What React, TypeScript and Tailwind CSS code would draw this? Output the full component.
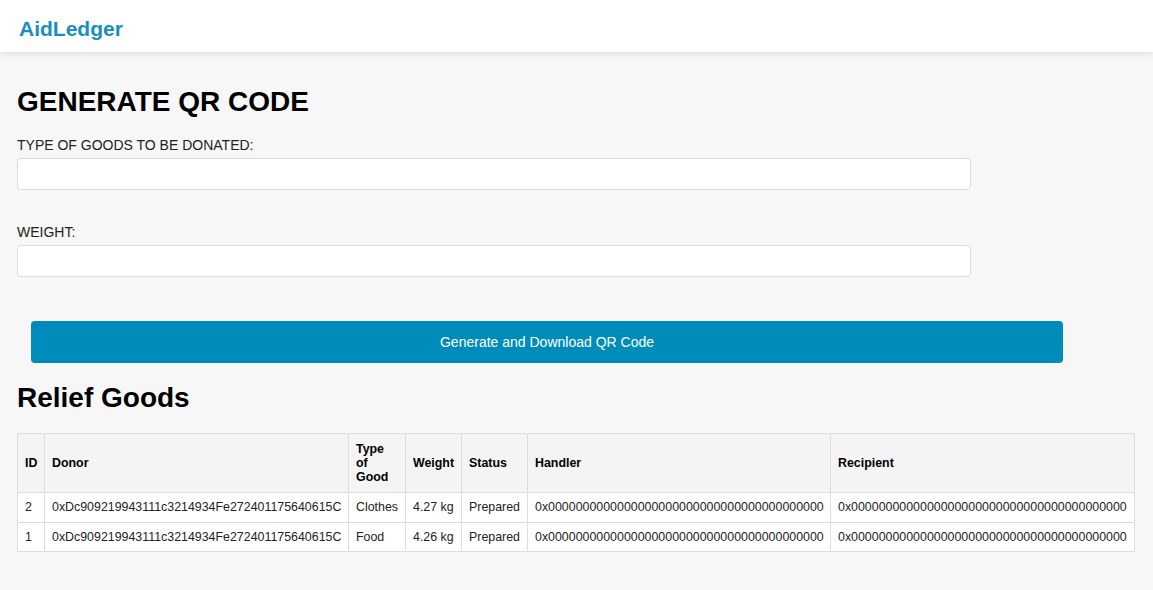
import React from "react";

const rows = [
  {
    id: "2",
    donor: "0xDc909219943111c3214934Fe272401175640615C",
    type: "Clothes",
    weight: "4.27 kg",
    status: "Prepared",
    handler: "0x0000000000000000000000000000000000000000",
    recipient: "0x0000000000000000000000000000000000000000",
  },
  {
    id: "1",
    donor: "0xDc909219943111c3214934Fe272401175640615C",
    type: "Food",
    weight: "4.26 kg",
    status: "Prepared",
    handler: "0x0000000000000000000000000000000000000000",
    recipient: "0x0000000000000000000000000000000000000000",
  },
];

const th = "border border-[#dddddd] bg-[#f4f4f4] px-[7px] py-[8px] text-left align-middle text-[12.4px] font-bold leading-[1.15] text-black";
const td = "border border-[#dddddd] bg-white px-[7px] py-[7px] text-left whitespace-nowrap text-[12.4px] leading-[1.15] text-[#222]";

export default function App() {
  return (
    <div className="min-h-screen bg-[#f7f7f7] font-['Liberation_Sans',Arial,sans-serif] leading-[1.15] text-[#222]">
      <header className="relative z-10 flex h-[52px] items-center bg-white px-[19px] pt-[6px] shadow-[0_2px_6px_rgba(0,0,0,0.1)]">
        <span className="text-[21px] font-bold text-[#1a8dbf]">AidLedger</span>
      </header>
      <main className="px-[17px]">
        <h1 className="mt-[34px] text-[28px] font-bold text-black">GENERATE QR CODE</h1>
        <label className="mt-[19px] block text-[14px] text-[#222]">TYPE OF GOODS TO BE DONATED:</label>
        <input className="mt-[5px] block h-[32px] w-[954px] rounded-[4px] border border-[#dddddd] bg-white px-2 outline-none" />
        <label className="mt-[34px] block text-[14px] text-[#222]">WEIGHT:</label>
        <input className="mt-[5px] block h-[32px] w-[954px] rounded-[4px] border border-[#dddddd] bg-white px-2 outline-none" />
        <button className="ml-[14px] mt-[44px] flex h-[42px] w-[1032px] items-center justify-center rounded-[4px] bg-[#008cba] text-[14px] text-white">
          Generate and Download QR Code
        </button>
        <h2 className="mt-[19px] text-[28px] font-bold text-black">Relief Goods</h2>
        <table className="mt-[18px] w-[1117px] table-fixed border-collapse border border-[#dddddd]">
          <colgroup>
            <col className="w-[27px]" />
            <col className="w-[304px]" />
            <col className="w-[57px]" />
            <col className="w-[56px]" />
            <col className="w-[66px]" />
            <col className="w-[303px]" />
            <col className="w-[304px]" />
          </colgroup>
          <thead>
            <tr>
              <th className={th}>ID</th>
              <th className={th}>Donor</th>
              <th className={th}>Type of Good</th>
              <th className={th}>Weight</th>
              <th className={th}>Status</th>
              <th className={th}>Handler</th>
              <th className={th}>Recipient</th>
            </tr>
          </thead>
          <tbody>
            {rows.map((r) => (
              <tr key={r.id}>
                <td className={td}>{r.id}</td>
                <td className={td}>{r.donor}</td>
                <td className={td}>{r.type}</td>
                <td className={td}>{r.weight}</td>
                <td className={td}>{r.status}</td>
                <td className={td}>{r.handler}</td>
                <td className={td}>{r.recipient}</td>
              </tr>
            ))}
          </tbody>
        </table>
      </main>
    </div>
  );
}
